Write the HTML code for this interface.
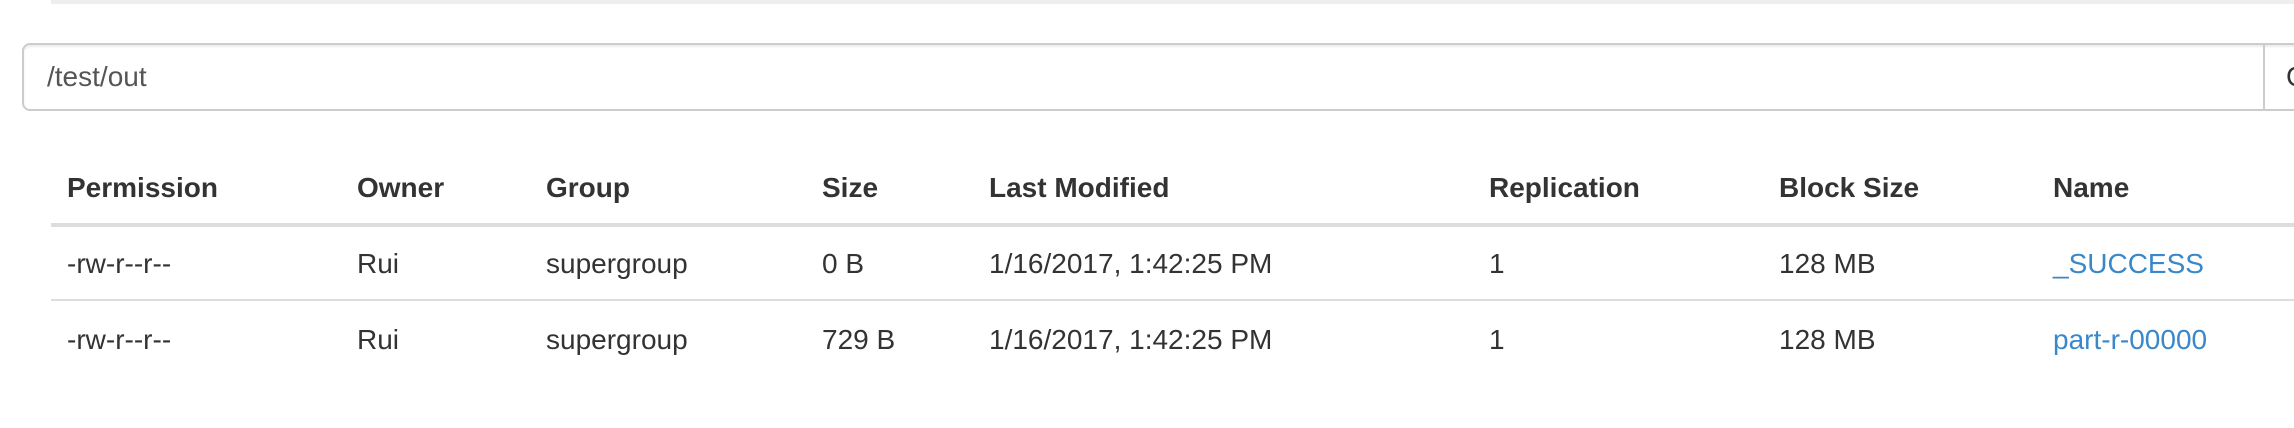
<!DOCTYPE html>
<html><head><style>
body{margin:0;width:2294px;height:428px;overflow:hidden;background:#fff;font-family:"Liberation Sans",sans-serif;font-size:28px;color:#333;position:relative}
.a{position:absolute;white-space:nowrap;line-height:32px}
.h{font-weight:bold}
.l{color:#3a87c9}
</style></head><body>
<div style="position:absolute;left:51px;right:0;top:0;height:4px;background:#eee"></div>
<div style="position:absolute;left:22px;top:43px;width:2300px;height:64px;border:2px solid #ccc;border-radius:8px;box-shadow:inset 0 2px 2px rgba(0,0,0,.075)"></div>
<div style="position:absolute;left:2263px;top:43px;width:2px;height:68px;background:#ccc"></div>
<div class="a" style="left:2286px;top:61px;color:#333">G</div>
<div class="a" style="left:47px;top:61px;color:#555">/test/out</div>
<div style="position:absolute;left:51px;right:0;top:223px;height:4px;background:#ddd"></div>
<div style="position:absolute;left:51px;right:0;top:299px;height:2px;background:#ddd"></div>
<div class="a h" style="left:67px;top:172px">Permission</div>
<div class="a h" style="left:357px;top:172px">Owner</div>
<div class="a h" style="left:546px;top:172px">Group</div>
<div class="a h" style="left:822px;top:172px">Size</div>
<div class="a h" style="left:989px;top:172px">Last Modified</div>
<div class="a h" style="left:1489px;top:172px">Replication</div>
<div class="a h" style="left:1779px;top:172px">Block Size</div>
<div class="a h" style="left:2053px;top:172px">Name</div>

<div class="a" style="left:67px;top:248px">-rw-r--r--</div>
<div class="a" style="left:357px;top:248px">Rui</div>
<div class="a" style="left:546px;top:248px">supergroup</div>
<div class="a" style="left:822px;top:248px">0 B</div>
<div class="a" style="left:989px;top:248px">1/16/2017, 1:42:25 PM</div>
<div class="a" style="left:1489px;top:248px">1</div>
<div class="a" style="left:1779px;top:248px">128 MB</div>
<div class="a l" style="left:2053px;top:248px">_SUCCESS</div>

<div class="a" style="left:67px;top:324px">-rw-r--r--</div>
<div class="a" style="left:357px;top:324px">Rui</div>
<div class="a" style="left:546px;top:324px">supergroup</div>
<div class="a" style="left:822px;top:324px">729 B</div>
<div class="a" style="left:989px;top:324px">1/16/2017, 1:42:25 PM</div>
<div class="a" style="left:1489px;top:324px">1</div>
<div class="a" style="left:1779px;top:324px">128 MB</div>
<div class="a l" style="left:2053px;top:324px">part-r-00000</div>
</body></html>
